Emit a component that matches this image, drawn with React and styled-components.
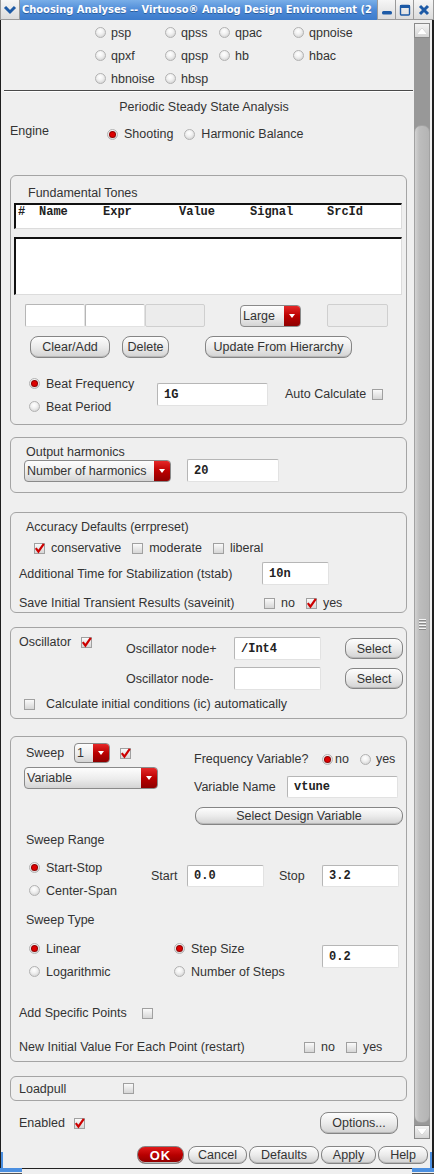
import styled, { createGlobalStyle } from "styled-components";

const GlobalStyle = createGlobalStyle`
  html, body {
    margin: 0;
    padding: 0;
    background: #efefef;
  }
  body {
    font-family: "Liberation Sans", Arial, sans-serif;
  }
`;

const Window = styled.div`
  width: 434px;
  height: 1174px;
  display: flex;
  flex-direction: column;
  background: #efefef;
  overflow: hidden;
  color: #333;
  font-size: 12.5px;
`;

/* ---------- title bar ---------- */

const TitleBar = styled.div`
  height: 20px;
  display: flex;
  flex: none;
`;

const WinButton = styled.div`
  width: ${(p) => p.$w}px;
  flex: none;
  display: flex;
  align-items: center;
  justify-content: center;
  box-sizing: border-box;
  background: linear-gradient(#f6f6f6, #dcdcdc);
  border: 1px solid #9a9a9a;
  border-top: none;
  ${(p) => (p.$first ? "" : "border-left: none;")}
`;

const TitleText = styled.div`
  flex: 1;
  min-width: 0;
  background: linear-gradient(#79aee8, #4a88d6 55%, #3d7ccc);
  color: #fff;
  font-family: "DejaVu Sans", "Liberation Sans", sans-serif;
  font-weight: bold;
  font-size: 11px;
  font-stretch: condensed;
  line-height: 20px;
  padding-left: 2px;
  white-space: nowrap;
  overflow: hidden;
  text-shadow: 0 1px 0 #2c5e9e;
`;

/* ---------- main area ---------- */

const Main = styled.div`
  height: 1119px;
  flex: none;
  display: flex;
  box-shadow: inset 1px 0 #1e1e1e, inset -2px 0 #1e1e1e;
`;

const Content = styled.div`
  width: 414px;
  flex: none;
  display: flex;
  flex-direction: column;
  overflow: hidden;
`;

const Scrollbar = styled.div`
  width: 16px;
  margin-top: 3px;
  display: flex;
  flex-direction: column;
  background: #989898;
`;

const ScrollArrow = styled.div`
  height: ${(p) => p.$h}px;
  flex: none;
  box-sizing: border-box;
  border: 1px solid #8a8a8a;
  background: linear-gradient(#f4f4f4, #d4d4d4);
  display: flex;
  align-items: center;
  justify-content: center;
  &::after {
    content: "";
    border-left: 5px solid transparent;
    border-right: 5px solid transparent;
    ${(p) => (p.$down ? "border-top: 6px solid #fff;" : "border-bottom: 6px solid #fff;")}
    filter: drop-shadow(0 0 0.5px #888);
  }
`;

const TrackGap = styled.div`
  height: ${(p) => p.$h}px;
  flex: none;
`;

const Thumb = styled.div`
  flex: 1;
  box-sizing: border-box;
  border-radius: 7px;
  border: 1px solid #a2a2a2;
  background: linear-gradient(90deg, #d2d2d2, #bdbdbd 30%, #b4b4b4);
  display: flex;
  flex-direction: column;
  align-items: center;
  justify-content: center;
  gap: 2px;
`;

const Grip = styled.span`
  width: 7px;
  height: 1px;
  background: #f4f4f4;
  box-shadow: 0 1px #8a8a8a;
`;

/* ---------- generic controls ---------- */

const Option = styled.span`
  display: flex;
  align-items: center;
  gap: ${(p) => p.$gap ?? 5}px;
  margin-left: ${(p) => p.$ml ?? 0}px;
  height: ${(p) => (p.$h ? `${p.$h}px` : "auto")};
  white-space: nowrap;
`;

const RadioDot = styled.span`
  width: 11px;
  height: 11px;
  flex: none;
  box-sizing: border-box;
  border-radius: 50%;
  border: 1px solid #b2b2b2;
  background: radial-gradient(circle at 45% 35%, #ffffff 0%, #f1f1f1 40%, #c9c9c9 100%);
  display: flex;
  align-items: center;
  justify-content: center;
  &::after {
    content: "";
    width: 5px;
    height: 5px;
    border-radius: 50%;
    background: ${(p) => (p.$on ? "#dd0000" : "transparent")};
    box-shadow: ${(p) => (p.$on ? "0 0 0 1px #8e0000" : "none")};
  }
`;

const CheckBox = styled.span`
  width: 11px;
  height: 11px;
  flex: none;
  box-sizing: border-box;
  border: 1px solid #a0a0a0;
  background: linear-gradient(#fafafa, #d6d6d6);
  display: flex;
  align-items: center;
  justify-content: center;
  overflow: visible;
`;

const Radio = ({ on, label, gap, ml, h }) => (
  <Option $gap={gap} $ml={ml} $h={h}>
    <RadioDot $on={on} />
    {label && <span>{label}</span>}
  </Option>
);

const Check = ({ on, label, gap, ml }) => (
  <Option $gap={gap ?? 6} $ml={ml}>
    <CheckBox>
      {on && (
        <svg width="11" height="11" viewBox="0 0 11 11" style={{ overflow: "visible" }}>
          <path d="M1.8 5.2 L4.4 8.6 L9.8 0.8" fill="none" stroke="#cc0000" strokeWidth="2.2" />
        </svg>
      )}
    </CheckBox>
    {label && <span>{label}</span>}
  </Option>
);

const Field = styled.div`
  width: ${(p) => p.$w}px;
  height: ${(p) => p.$h ?? 23}px;
  flex: none;
  box-sizing: border-box;
  margin-left: ${(p) => p.$ml ?? 0}px;
  margin-top: ${(p) => p.$mt ?? 0}px;
  background: ${(p) => (p.$off ? "#ececec" : "#fff")};
  border: 1px solid;
  border-color: ${(p) => (p.$off ? "#cfcfcf" : "#b6b6b6 #e2e2e2 #e2e2e2 #b6b6b6")};
  border-radius: 2px;
  font-family: "Liberation Mono", "Courier New", monospace;
  font-weight: bold;
  font-size: 12px;
  color: #222;
  padding-left: 6px;
  display: flex;
  align-items: center;
`;

const Button = styled.button`
  width: ${(p) => p.$w}px;
  height: ${(p) => p.$h ?? 22}px;
  flex: none;
  margin-left: ${(p) => p.$ml ?? 0}px;
  margin-top: ${(p) => p.$mt ?? 0}px;
  padding: 0;
  border: 1px solid #858585;
  border-radius: 8px;
  background: ${(p) =>
    p.$primary
      ? "linear-gradient(#e01a1a, #b80000 50%, #8c0000)"
      : "linear-gradient(#fdfdfd, #ebebeb 50%, #d2d2d2)"};
  box-shadow: inset 0 -1px #b8b8b8;
  font-family: "Liberation Sans", Arial, sans-serif;
  font-size: ${(p) => (p.$primary ? "13px" : "12.5px")};
  font-weight: ${(p) => (p.$primary ? "bold" : "normal")};
  letter-spacing: ${(p) => (p.$primary ? "1px" : "0")};
  color: ${(p) => (p.$primary ? "#fff" : "#333")};
`;

const Dropdown = styled.div`
  width: ${(p) => p.$w}px;
  height: ${(p) => p.$h ?? 22}px;
  flex: none;
  margin-left: ${(p) => p.$ml ?? 0}px;
  margin-top: ${(p) => p.$mt ?? 0}px;
  box-sizing: border-box;
  display: flex;
  border: 1px solid #8a8a8a;
  border-radius: 4px;
  overflow: hidden;
  background: linear-gradient(#fdfdfd, #ececec 55%, #d4d4d4);
`;

const DropLabel = styled.span`
  flex: 1;
  display: flex;
  align-items: center;
  padding-left: 2px;
  white-space: nowrap;
  overflow: hidden;
`;

const DropArrow = styled.span`
  width: 16px;
  flex: none;
  background: linear-gradient(#e52828, #bb0000 50%, #8e0000);
  display: flex;
  align-items: center;
  justify-content: center;
  &::after {
    content: "";
    border-left: 3.5px solid transparent;
    border-right: 3.5px solid transparent;
    border-top: 4px solid #fff;
  }
`;

const Select = ({ w, h, ml, mt, children }) => (
  <Dropdown $w={w} $h={h} $ml={ml} $mt={mt}>
    <DropLabel>{children}</DropLabel>
    <DropArrow />
  </Dropdown>
);

const Label = styled.span`
  width: ${(p) => (p.$w ? `${p.$w}px` : "auto")};
  flex: none;
  margin-left: ${(p) => p.$ml ?? 0}px;
  white-space: nowrap;
`;

/* ---------- layout pieces ---------- */

const AnalysisGrid = styled.div`
  display: grid;
  grid-template-columns: 70px 54px 74px auto;
  grid-auto-rows: 23px;
  align-items: center;
  padding-left: 95px;
  margin-top: 1px;
`;

const Separator = styled.div`
  height: 1px;
  margin: 0 1px 0 4px;
  background: #4a4a4a;
  box-shadow: 0 1px #ffffff;
`;

const Heading = styled.div`
  text-align: center;
  line-height: 16px;
  margin-top: 8px;
  padding-right: 6px;
`;

const Row = styled.div`
  display: flex;
  align-items: ${(p) => p.$align ?? "center"};
  height: ${(p) => (p.$h ? `${p.$h}px` : "auto")};
  margin-top: ${(p) => p.$mt ?? 0}px;
  padding-left: ${(p) => p.$pl ?? 0}px;
  padding-right: ${(p) => p.$pr ?? 0}px;
  gap: ${(p) => p.$gap ?? 0}px;
`;

const Column = styled.div`
  display: flex;
  flex-direction: column;
  width: ${(p) => (p.$w ? `${p.$w}px` : "auto")};
  flex: none;
  gap: ${(p) => p.$gap ?? 0}px;
`;

const Group = styled.div`
  margin-top: ${(p) => p.$mt}px;
  margin-left: 10px;
  width: 397px;
  box-sizing: border-box;
  border: 1px solid #a4a4a4;
  border-radius: 6px;
  padding: ${(p) => p.$pad ?? "0"};
`;

const GroupTitle = styled.div`
  line-height: 14px;
  margin-top: ${(p) => p.$mt ?? 0}px;
  padding-left: ${(p) => p.$pl ?? 15}px;
`;

const TableBox = styled.div`
  margin: ${(p) => p.$mt}px 4px 0 3px;
  height: ${(p) => p.$h}px;
  box-sizing: border-box;
  background: #fff;
  border-top: 2px solid #111;
  border-left: 2px solid #111;
  border-right: 1px solid #dcdcdc;
  border-bottom: 1px solid #dcdcdc;
`;

const TableHead = styled.div`
  display: grid;
  grid-template-columns: 21px 64px 76px 71px 77px 1fr;
  padding-left: 2px;
  line-height: 14px;
  font-family: "Liberation Mono", "Courier New", monospace;
  font-weight: bold;
  font-size: 12px;
  color: #222;
`;

const ButtonBar = styled.div`
  height: 29px;
  flex: none;
  box-sizing: border-box;
  display: flex;
  justify-content: flex-end;
  align-items: flex-start;
  gap: 2px;
  padding: 7px 6px 0 0;
  background: linear-gradient(#4b8fe0, #4b8fe0) left 0 bottom 0 / 3px 16px no-repeat,
    linear-gradient(#4b8fe0, #4b8fe0) right 0 bottom 0 / 4px 16px no-repeat, #efefef;
  box-shadow: inset 1px 0 #1e1e1e, inset -2px 0 #1e1e1e;
`;

const BottomEdge = styled.div`
  height: 6px;
  flex: none;
  display: flex;
`;

const EdgeCorner = styled.div`
  width: 22px;
  flex: none;
  background: linear-gradient(#4b8fe0, #4b8fe0) 0 0 / 100% 4px no-repeat, #efefef;
  border-bottom: 1px solid #555;
`;

const EdgeMiddle = styled.div`
  flex: 1;
  border-top: 1px solid #222;
  background: #efefef;
`;

const App = () => {
  const analyses = [
    "psp", "qpss", "qpac", "qpnoise",
    "qpxf", "qpsp", "hb", "hbac",
    "hbnoise", "hbsp",
  ];

  return (
    <>
      <GlobalStyle />
      <Window>
        <TitleBar>
          <WinButton $w={20} $first>
            <svg width="14" height="10" viewBox="0 0 14 10">
              <path d="M2 2 L7 7 L12 2" fill="none" stroke="#1d5aa6" strokeWidth="3" />
            </svg>
          </WinButton>
          <TitleText>Choosing Analyses -- Virtuoso® Analog Design Environment (2</TitleText>
          <WinButton $w={19} $first>
            <svg width="12" height="12" viewBox="0 0 12 12">
              <rect x="1" y="7" width="10" height="3.5" rx="1.5" fill="#1d5aa6" />
            </svg>
          </WinButton>
          <WinButton $w={18}>
            <svg width="12" height="12" viewBox="0 0 12 12">
              <rect x="1.5" y="1.5" width="9" height="9.5" rx="1" fill="none" stroke="#1d5aa6" strokeWidth="1.4" />
              <rect x="1" y="1" width="10" height="3" fill="#1d5aa6" />
            </svg>
          </WinButton>
          <WinButton $w={20}>
            <svg width="12" height="12" viewBox="0 0 12 12">
              <path d="M2 2 L10 10 M10 2 L2 10" stroke="#1d5aa6" strokeWidth="3" />
            </svg>
          </WinButton>
        </TitleBar>

        <Main>
          <Content>
            <AnalysisGrid>
              {analyses.map((a) => (
                <Radio key={a} label={a} gap={5} />
              ))}
            </AnalysisGrid>
            <Separator />

            <Heading>Periodic Steady State Analysis</Heading>

            <Row $align="flex-start" $h={20} $mt={9} $pl={10}>
              <Label $w={97}>Engine</Label>
              <Row $h={20}>
                <Radio on label="Shooting" gap={6} />
                <Radio label="Harmonic Balance" gap={6} ml={11} />
              </Row>
            </Row>

            {/* Fundamental tones */}
            <Group $mt={31} $pad="10px 0 6px 0">
              <GroupTitle $pl={17}>Fundamental Tones</GroupTitle>
              <TableBox $mt={3} $h={26}>
                <TableHead>
                  <span>#</span>
                  <span>Name</span>
                  <span>Expr</span>
                  <span>Value</span>
                  <span>Signal</span>
                  <span>SrcId</span>
                </TableHead>
              </TableBox>
              <TableBox $mt={8} $h={58} />

              <Row $h={23} $mt={9} $pl={14}>
                <Field $w={60} />
                <Field $w={60} />
                <Field $w={60} $off />
                <Select w={61} ml={35}>Large</Select>
                <Field $w={61} $ml={26} $off />
              </Row>

              <Row $h={22} $mt={9} $pl={19}>
                <Button $w={80}>Clear/Add</Button>
                <Button $w={47} $ml={12}>Delete</Button>
                <Button $w={147} $ml={36}>Update From Hierarchy</Button>
              </Row>

              <Row $align="flex-start" $mt={14} $pl={18}>
                <Column $w={128}>
                  <Radio on label="Beat Frequency" h={23} gap={6} />
                  <Radio label="Beat Period" h={23} gap={6} />
                </Column>
                <Field $w={111} $mt={11}>1G</Field>
                <Row $mt={15} $gap={6}>
                  <Label $ml={17}>Auto Calculate</Label>
                  <Check />
                </Row>
              </Row>
            </Group>

            {/* Output harmonics */}
            <Group $mt={12} $pad="7px 0 10px 0">
              <GroupTitle>Output harmonics</GroupTitle>
              <Row $pl={13} $gap={16}>
                <Select w={147}>Number of harmonics</Select>
                <Field $w={92}>20</Field>
              </Row>
            </Group>

            {/* Accuracy */}
            <Group $mt={19} $pad="7px 0 0 0">
              <GroupTitle>Accuracy Defaults (errpreset)</GroupTitle>
              <Row $h={16} $mt={6} $pl={23}>
                <Check on label="conservative" />
                <Check label="moderate" ml={11} />
                <Check label="liberal" ml={11} />
              </Row>
              <Row $h={23} $mt={6} $pl={8}>
                <Label $w={243}>Additional Time for Stabilization (tstab)</Label>
                <Field $w={67}>10n</Field>
              </Row>
              <Row $h={18} $mt={9} $pl={8}>
                <Label $w={245}>Save Initial Transient Results (saveinit)</Label>
                <Check label="no" />
                <Check on label="yes" ml={11} />
              </Row>
            </Group>

            {/* Oscillator */}
            <Group $mt={14} $pad="9px 0 6px 0">
              <Row $align="flex-start" $pl={8}>
                <Row $h={14} $gap={10} style={{ width: 107, marginTop: -2 }}>
                  <span>Oscillator</span>
                  <Check on />
                </Row>
                <Column $gap={7}>
                  <Row $h={23}>
                    <Label $w={108}>Oscillator node+</Label>
                    <Field $w={87}>/Int4</Field>
                    <Button $w={58} $h={21} $ml={24}>Select</Button>
                  </Row>
                  <Row $h={23}>
                    <Label $w={108}>Oscillator node-</Label>
                    <Field $w={87} />
                    <Button $w={58} $h={21} $ml={24}>Select</Button>
                  </Row>
                </Column>
              </Row>
              <Row $h={16} $mt={6} $pl={13}>
                <Check label="Calculate initial conditions (ic) automatically" gap={11} />
              </Row>
            </Group>

            {/* Sweep */}
            <Group $mt={17} $pad="6px 0 6px 0">
              <Row $align="flex-start" $pl={13}>
                <Column $w={170}>
                  <Row $h={20} $pl={2}>
                    <Label $w={48}>Sweep</Label>
                    <Select w={36} h={20}>1</Select>
                    <Option $ml={10}>
                      <Check on />
                    </Option>
                  </Row>
                  <Select w={134} mt={4}>Variable</Select>
                </Column>
                <Column $w={209}>
                  <Row $h={20} $mt={6}>
                    <Label $w={128}>Frequency Variable?</Label>
                    <Radio on label="no" gap={2} />
                    <Radio label="yes" gap={5} ml={11} />
                  </Row>
                  <Row $h={22} $mt={7}>
                    <Label $w={93}>Variable Name</Label>
                    <Field $w={111} $h={22}>vtune</Field>
                  </Row>
                  <Button $w={208} $h={18} $mt={9} $ml={1}>Select Design Variable</Button>
                </Column>
              </Row>

              <GroupTitle $mt={8}>Sweep Range</GroupTitle>
              <Row $align="flex-start" $mt={9} $pl={18}>
                <Column $w={122}>
                  <Radio on label="Start-Stop" h={23} gap={6} />
                  <Radio label="Center-Span" h={23} gap={6} />
                </Column>
                <Row $h={22} $mt={9}>
                  <Label $w={36}>Start</Label>
                  <Field $w={77} $h={22}>0.0</Field>
                  <Label $w={43} $ml={15}>Stop</Label>
                  <Field $w={77} $h={22}>3.2</Field>
                </Row>
              </Row>

              <GroupTitle $mt={11}>Sweep Type</GroupTitle>
              <Row $align="flex-start" $mt={10} $pl={18}>
                <Column $w={145}>
                  <Radio on label="Linear" h={23} gap={6} />
                  <Radio label="Logarithmic" h={23} gap={6} />
                </Column>
                <Column $w={148}>
                  <Radio on label="Step Size" h={23} gap={6} />
                  <Radio label="Number of Steps" h={23} gap={6} />
                </Column>
                <Field $w={77} $mt={8}>0.2</Field>
              </Row>

              <Row $h={16} $mt={22} $pl={8} $gap={15}>
                <span>Add Specific Points</span>
                <Check />
              </Row>
              <Row $h={16} $mt={18} $pl={8}>
                <Label $w={285}>New Initial Value For Each Point (restart)</Label>
                <Check label="no" />
                <Check label="yes" ml={11} />
              </Row>
            </Group>

            {/* Loadpull */}
            <Group $mt={14}>
              <Row $h={23} $pl={8}>
                <Label $w={104}>Loadpull</Label>
                <Check />
              </Row>
            </Group>

            <Row $h={22} $mt={11} $pl={19} $pr={16}>
              <Row $gap={9}>
                <span>Enabled</span>
                <Check on />
              </Row>
              <Button $w={78} style={{ marginLeft: "auto" }}>Options...</Button>
            </Row>
          </Content>

          <Scrollbar>
            <ScrollArrow $h={15} />
            <TrackGap $h={87} />
            <Thumb>
              <Grip />
              <Grip />
              <Grip />
              <Grip />
            </Thumb>
            <TrackGap $h={2} />
            <ScrollArrow $h={14} $down />
          </Scrollbar>
        </Main>

        <ButtonBar>
          <Button $primary $w={47} $h={18} style={{ marginRight: 2 }}>OK</Button>
          <Button $w={59} $h={18}>Cancel</Button>
          <Button $w={70} $h={18}>Defaults</Button>
          <Button $w={55} $h={18}>Apply</Button>
          <Button $w={50} $h={18}>Help</Button>
        </ButtonBar>
        <BottomEdge>
          <EdgeCorner />
          <EdgeMiddle />
          <EdgeCorner />
        </BottomEdge>
      </Window>
    </>
  );
};

export default App;
